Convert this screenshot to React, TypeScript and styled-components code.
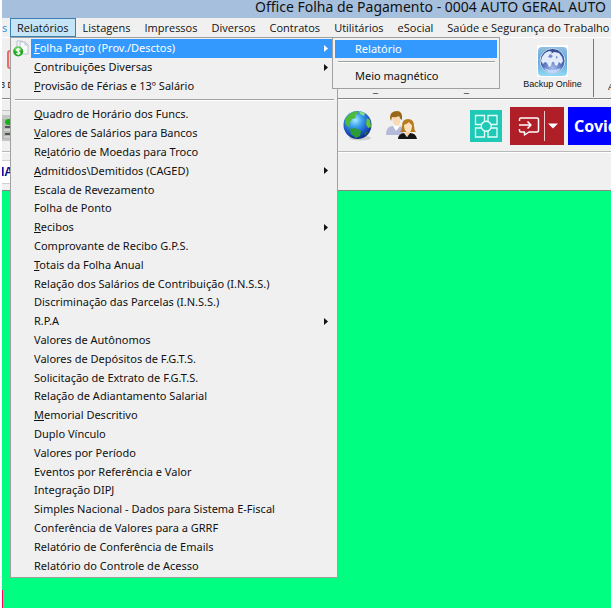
import React from "react";
import styled, { createGlobalStyle } from "styled-components";

const Global = createGlobalStyle`
  * { box-sizing: border-box; }
  html, body, #root { height: 100%; margin: 0; }
  body { background: #fff; overflow: hidden; }
  button { font: inherit; color: inherit; background: none; border: 0; padding: 0; margin: 0; }
  ul { list-style: none; margin: 0; padding: 0; }
`;

const Window = styled.div`
  position: relative;
  display: flex;
  flex-direction: column;
  height: 100vh;
  border: solid #fff;
  border-width: 0 3px 1px 2px;
  background: #f0f0f0;
  color: #111;
  font: 11px/16px "Open Sans", "Noto Sans", sans-serif;
  overflow: hidden;
`;

const TitleBar = styled.header`
  flex: none;
  height: 18px;
  padding-left: 253px;
  background: #a6bfdc;
  font-family: "Noto Sans", "Open Sans", sans-serif;
  font-size: 14px;
  line-height: 13px;
  white-space: nowrap;
  overflow: hidden;
`;

const MenuBar = styled.nav`
  flex: none;
  display: flex;
  height: 19px;
  white-space: nowrap;
  overflow: hidden;
`;

const MenuTail = styled.button`
  flex: none;
  width: 8px;
  color: #1e90e0;
  text-align: left;
`;

const MenuTitle = styled.button<{ $open?: boolean }>`
  flex: none;
  padding: 0 6px;
  border: 1px solid ${(p) => (p.$open ? "#3c7fb1" : "transparent")};
  background: ${(p) => (p.$open ? "#c5e4f5" : "transparent")};
  line-height: 17px;
`;

const Toolbar = styled.div<{ $height: number; $soft?: boolean }>`
  flex: none;
  display: flex;
  align-items: center;
  height: ${(p) => p.$height}px;
  border-top: 1px solid #fff;
  border-bottom: 1px solid ${(p) => (p.$soft ? "#b8b8b8" : "#858585")};
  overflow: hidden;
`;

const LeftSlot = styled.div`
  flex: none;
  display: flex;
  flex-direction: column;
  width: 8px;
  height: 100%;
  overflow: hidden;
`;

const RedMark = styled.span`
  width: 12px;
  height: 19px;
  margin: 12px 0 0 5px;
  border: 2px solid #ee6b6b;
  border-radius: 3px;
  background: #fbd5d5;
`;

const TinyLabel = styled.span`
  margin: 9px 0 0 -2px;
  font: 9px/14px "Liberation Sans", Arial, sans-serif;
  white-space: nowrap;
`;

const ListSlot = styled.span`
  margin-top: 10px;
  svg { display: block; }
`;

const CompanyField = styled.span`
  margin: 7px 0 0 -1px;
  height: 24px;
  border: solid #d0d0d0;
  border-width: 1px 0;
  background: #fff;
  color: #0a0a96;
  font: bold 12px/22px "Liberation Sans", Arial, sans-serif;
`;

const CoveredLabels = styled.div`
  flex: none;
  display: flex;
  align-self: flex-end;
  gap: 86px;
  margin-left: 363px;
  font: 9px/18px "Liberation Sans", Arial, sans-serif;
`;

const ToolButton = styled.button`
  display: flex;
  flex: none;
  flex-direction: column;
  align-items: center;
  gap: 1px;
  width: 82px;
  height: 58px;
  margin-left: auto;
  padding-top: 6px;
  border-right: 1px solid #777;
  font: 9px/12px "Liberation Sans", Arial, sans-serif;
  white-space: nowrap;
`;

const EdgeButton = styled.button`
  flex: none;
  width: 17px;
  height: 58px;
  padding: 38px 0 0 14px;
  font: 9px/12px "Liberation Sans", Arial, sans-serif;
`;

const IconButtons = styled.div<{ $push?: boolean }>`
  display: flex;
  align-items: center;
  gap: ${(p) => (p.$push ? "8px" : "12px")};
  margin-left: ${(p) => (p.$push ? "auto" : "333px")};
  svg { display: block; }
`;

const RedButton = styled.button`
  width: 54px;
  height: 38px;
  background: #b01e28;
`;

const CovidButton = styled.button`
  width: 43px;
  height: 38px;
  margin-left: -4px;
  padding-left: 6px;
  background: #00f;
  color: #fff;
  font: bold 16px/38px "Noto Sans", sans-serif;
  text-align: left;
  overflow: hidden;
`;

const Workspace = styled.main`
  flex: 1;
  display: flex;
  align-items: flex-end;
  background: #00ff80;
`;

const PinkEdge = styled.span`
  width: 1px;
  height: 18px;
  background: #ff0060;
`;

const Popup = styled.div`
  position: absolute;
  border: 1px solid #a0a0a0;
  background: #f0f0f0;
  font-family: "Noto Sans", "Open Sans", sans-serif;
`;

const MainMenu = styled(Popup)`
  top: 37px;
  left: 8px;
  width: 328px;
  padding: 1px 1px 2px;
`;

const SubMenu = styled(Popup)`
  top: 37px;
  left: 330px;
  width: 168px;
  padding: 2px 2px 3px;
`;

const Group = styled.ul<{ $height: number }>`
  display: flex;
  flex-direction: column;
  height: ${(p) => p.$height}px;
  li { flex: 1; min-height: 0; display: flex; }
`;

const Separator = styled.hr<{ $above: number; $below: number }>`
  height: 2px;
  margin: ${(p) => p.$above}px 2px ${(p) => p.$below}px 3px;
  border: 0;
  border-top: 1px solid #a0a0a0;
  border-bottom: 1px solid #fff;
`;

const MenuItem = styled.button<{ $active?: boolean }>`
  flex: 1;
  display: flex;
  align-items: center;
  color: ${(p) => (p.$active ? "#fff" : "#111")};
  text-align: left;
  white-space: nowrap;
`;

const IconCell = styled.span`
  flex: none;
  display: flex;
  justify-content: center;
  width: 19px;
`;

const ItemText = styled.span<{ $active?: boolean; $indent?: boolean }>`
  flex: 1;
  align-self: stretch;
  display: flex;
  align-items: center;
  justify-content: space-between;
  padding: 0 8px 0 ${(p) => (p.$indent ? 20 : 3)}px;
  background: ${(p) => (p.$active ? "#3399ff" : "transparent")};
`;

type Item = { label: string; key?: number; sub?: boolean; active?: boolean; icon?: boolean };

const menus = ["Relatórios", "Listagens", "Impressos", "Diversos", "Contratos", "Utilitários", "eSocial", "Saúde e Segurança do Trabalho"];

const payroll: Item[] = [
  { label: "Folha Pagto (Prov./Desctos)", key: 0, sub: true, active: true, icon: true },
  { label: "Contribuições Diversas", key: 0, sub: true },
  { label: "Provisão de Férias e 13º Salário", key: 0 },
];

const reports: Item[] = [
  { label: "Quadro de Horário dos Funcs.", key: 0 },
  { label: "Valores de Salários para Bancos", key: 0 },
  { label: "Relatório de Moedas para Troco", key: 2 },
  { label: "Admitidos\\Demitidos (CAGED)", key: 0, sub: true },
  { label: "Escala de Revezamento" },
  { label: "Folha de Ponto" },
  { label: "Recibos", key: 0, sub: true },
  { label: "Comprovante de Recibo G.P.S." },
  { label: "Totais da Folha Anual", key: 0 },
  { label: "Relação dos Salários de Contribuição (I.N.S.S.)" },
  { label: "Discriminação das Parcelas (I.N.S.S.)" },
  { label: "R.P.A", sub: true },
  { label: "Valores de Autônomos" },
  { label: "Valores de Depósitos de F.G.T.S." },
  { label: "Solicitação de Extrato de F.G.T.S." },
  { label: "Relação de Adiantamento Salarial" },
  { label: "Memorial Descritivo", key: 0 },
  { label: "Duplo Vínculo" },
  { label: "Valores por Período" },
  { label: "Eventos por Referência e Valor" },
  { label: "Integração DIPJ" },
  { label: "Simples Nacional - Dados para Sistema E-Fiscal" },
  { label: "Conferência de Valores para a GRRF" },
  { label: "Relatório de Conferência de Emails" },
  { label: "Relatório do Controle de Acesso" },
];

const Arrow = () => (
  <svg width="4" height="7" viewBox="0 0 4 7" aria-hidden="true"><path d="M0 0 4 3.5 0 7Z" fill="currentColor" /></svg>
);

const MoneyPages = () => (
  <svg width="17" height="17" viewBox="0 0 17 17" aria-hidden="true">
    <path d="M4 1h5l2 2v8H4Z" fill="#f5f7fa" stroke="#b9c2cf" />
    <path d="M7 2h5l3 3v9H7Z" fill="#f8fafc" stroke="#b9c2cf" />
    <path d="M12 2v3h3" fill="none" stroke="#b9c2cf" />
    <circle cx="5.2" cy="11.5" r="5" fill="#25a825" />
    <ellipse cx="5" cy="9.3" rx="3.4" ry="2.3" fill="#6fd45f" />
    <path d="M7 9.5C6.4 8.7 3.6 8.5 3.6 10.1S7 11.4 7 13 4 14.3 3.3 13.3M5.2 8v7" fill="none" stroke="#fff" strokeWidth="1.1" />
  </svg>
);

const ListIcon = () => (
  <svg width="18" height="32" viewBox="0 0 18 32" aria-hidden="true">
    <rect width="18" height="31" fill="#c3c6c3" />
    <path d="M0 1h18v4H0Z" fill="#e8e8e8" />
    <path d="M0 9h18v20H0Z" fill="#b4b8b4" />
    <ellipse cx="7" cy="12" rx="4" ry="3" fill="#12b312" />
    <path d="M3 17h8M3 24h8" stroke="#555" strokeWidth="2" />
    <path d="M2 20h8M2 27h8" stroke="#eee" />
  </svg>
);

const BackupIcon = () => (
  <svg width="31" height="32" viewBox="0 0 31 32" aria-hidden="true">
    <defs>
      <linearGradient id="tile" x2="0" y2="1"><stop stopColor="#92bfe2" /><stop offset=".5" stopColor="#5fa5d4" /><stop offset="1" stopColor="#93daf5" /></linearGradient>
      <radialGradient id="ball" cx=".5" cy=".8" r=".8"><stop stopColor="#a5bdee" /><stop offset=".55" stopColor="#4a68b4" /><stop offset="1" stopColor="#33478e" /></radialGradient>
    </defs>
    <rect width="31" height="32" fill="#fff" />
    <rect x="1" y="2" width="29" height="29" rx="4" fill="url(#tile)" />
    <circle cx="15.5" cy="16" r="12.5" fill="url(#ball)" stroke="#c6ddf3" strokeWidth="1" />
    <path d="M5 12l3-4 4-2 3 1-1 2 3-2 5 1 3 4 1 4-2 3-2-2-2 4-2-1-1-3-2 0-1 4-2 1-2-4-2-1-2 2-2-3Z" fill="#e3ebfb" />
    <path d="M13 9l3 2-2 2-3-1ZM19 11l2 1-2 2Z" fill="#7189c4" />
    <path d="M7 23q8 4 17 0-3 5-8.500 5T7 23Z" fill="#c2d8fa" />
  </svg>
);

const GlobeIcon = () => (
  <svg width="30" height="31" viewBox="0 0 30 31" aria-hidden="true">
    <defs>
      <radialGradient id="sea" cx=".42" cy=".32" r=".7"><stop stopColor="#a7ecff" /><stop offset=".35" stopColor="#3aa0ec" /><stop offset=".75" stopColor="#1a4fbe" /><stop offset="1" stopColor="#0d2878" /></radialGradient>
    </defs>
    <ellipse cx="17" cy="28" rx="11" ry="2.5" fill="#cfcfcf" />
    <circle cx="14.5" cy="15" r="14" fill="url(#sea)" />
    <path d="M3 8Q7 2 14 1l1 3-3 1 1 3-4 1-3 5 1 3-3-1-2-3Z" fill="#4fb93a" />
    <path d="M16 1l6 2-1 3-4-2Z" fill="#8edc80" />
    <path d="M24 8l3 2 1 7-3 1-2-4Z" fill="#67c431" />
    <path d="M7 19l5-1 6 3-1 5-4 2-5-4Z" fill="#2b9b33" />
    <path d="M21 24l4-3-2 4Z" fill="#257e3c" />
  </svg>
);

const UsersIcon = () => (
  <svg width="32" height="31" viewBox="0 0 32 31" aria-hidden="true">
    <path d="M1 25Q1 16 8 16h7q4 2 3 9Z" fill="#b4bad9" />
    <path d="M8 16l3 5 4-5Z" fill="#fff" />
    <path d="M7 5q4-2 8 0 1 10-3 11Q7 15 7 5Z" fill="#f8d9b3" />
    <path d="M5 8Q5 1 12 1q6 0 5 9-2-1-3-4-4 2-7 1l-1 4Z" fill="#986718" />
    <path d="M15 22q2-2 2-6 0-7 6-7t6 7q0 4 2 6Z" fill="#b87b20" />
    <path d="M19 15q3-1 5-3 1 2 3 3 0 7-4 8-4-2-4-8Z" fill="#fbe1bd" />
    <path d="M13 29q0-5 6-6l3 4 3-4q6 0 7 6Z" fill="#151515" />
    <path d="M20 22h5l-3 5Z" fill="#f6cf9d" />
  </svg>
);

const TealIcon = () => (
  <svg width="32" height="32" viewBox="0 0 32 32" aria-hidden="true">
    <rect width="32" height="32" fill="#20c9b5" />
    <g fill="none" stroke="#e3fffa" strokeWidth="1.3">
      <path d="M5.500 5.500h9v6l-3 3h-6ZM18 5.500h9v9h-6l-3-3ZM5.500 18h6l3 3v6h-9ZM21 18h6v9h-9v-6Z" />
      <circle cx="16.250" cy="16.250" r="5" fill="#20c9b5" />
    </g>
  </svg>
);

const ShareIcon = () => (
  <svg width="54" height="38" viewBox="0 0 54 38" aria-hidden="true">
    <g fill="none" stroke="#fff" strokeWidth="1.500" strokeLinejoin="round">
      <path d="M9.500 14v-1.500q0-1.500 1.500-1.500h16q1.500 0 1.500 1.500v11q0 1.500-1.500 1.500h-8l-4.500 3v-3H11q-1.500 0-1.500-1.500V22" />
      <path d="M9 18h12M17.500 14.500l3.500 3.500-3.500 3.500" />
      <path d="M34.500 4v30" stroke="#ecc" strokeWidth="1" />
    </g>
    <path d="M38 16.500h10l-5 5Z" fill="#fff" />
  </svg>
);

function Label({ text, at }: { text: string; at?: number }) {
  if (at === undefined) return <span>{text}</span>;
  return <span>{text.slice(0, at)}<u>{text[at]}</u>{text.slice(at + 1)}</span>;
}

function Entries({ items, height }: { items: Item[]; height: number }) {
  return (
    <Group $height={height} role="group">
      {items.map((it) => (
        <li key={it.label} role="none">
          <MenuItem role="menuitem" $active={it.active}>
            <IconCell>{it.icon && <MoneyPages />}</IconCell>
            <ItemText $active={it.active}>
              <Label text={it.label} at={it.key} />
              {it.sub && <Arrow />}
            </ItemText>
          </MenuItem>
        </li>
      ))}
    </Group>
  );
}

export default function App() {
  return (
    <>
      <Global />
      <Window>
        <TitleBar>Office Folha de Pagamento - 0004 AUTO GERAL AUTO</TitleBar>
        <MenuBar>
          <MenuTail>s</MenuTail>
          {menus.map((m, i) => <MenuTitle key={m} $open={i === 0}>{m}</MenuTitle>)}
        </MenuBar>
        <Toolbar $height={62}>
          <LeftSlot><RedMark /><TinyLabel>3 D</TinyLabel></LeftSlot>
          <CoveredLabels><span>_</span><span>_</span></CoveredLabels>
          <ToolButton><BackupIcon />Backup Online</ToolButton>
          <EdgeButton>A</EdgeButton>
        </Toolbar>
        <Toolbar $height={53} $soft>
          <LeftSlot><ListSlot><ListIcon /></ListSlot></LeftSlot>
          <IconButtons>
            <button aria-label="Internet"><GlobeIcon /></button>
            <button aria-label="Usuários"><UsersIcon /></button>
          </IconButtons>
          <IconButtons $push>
            <button aria-label="Módulos"><TealIcon /></button>
            <RedButton aria-label="Enviar"><ShareIcon /></RedButton>
            <CovidButton>Covid</CovidButton>
          </IconButtons>
        </Toolbar>
        <Toolbar $height={39}>
          <LeftSlot><CompanyField>IA</CompanyField></LeftSlot>
        </Toolbar>
        <Workspace><PinkEdge /></Workspace>
        <MainMenu role="menu">
          <Entries items={payroll} height={56} />
          <Separator $above={4} $below={4} />
          <Entries items={reports} height={470} />
        </MainMenu>
        <SubMenu role="menu">
          <Group $height={18}>
            <li><MenuItem role="menuitem" $active><ItemText $active $indent>Relatório</ItemText></MenuItem></li>
          </Group>
          <Separator $above={3} $below={4} />
          <Group $height={18}>
            <li><MenuItem role="menuitem"><ItemText $indent>Meio magnético</ItemText></MenuItem></li>
          </Group>
        </SubMenu>
      </Window>
    </>
  );
}
